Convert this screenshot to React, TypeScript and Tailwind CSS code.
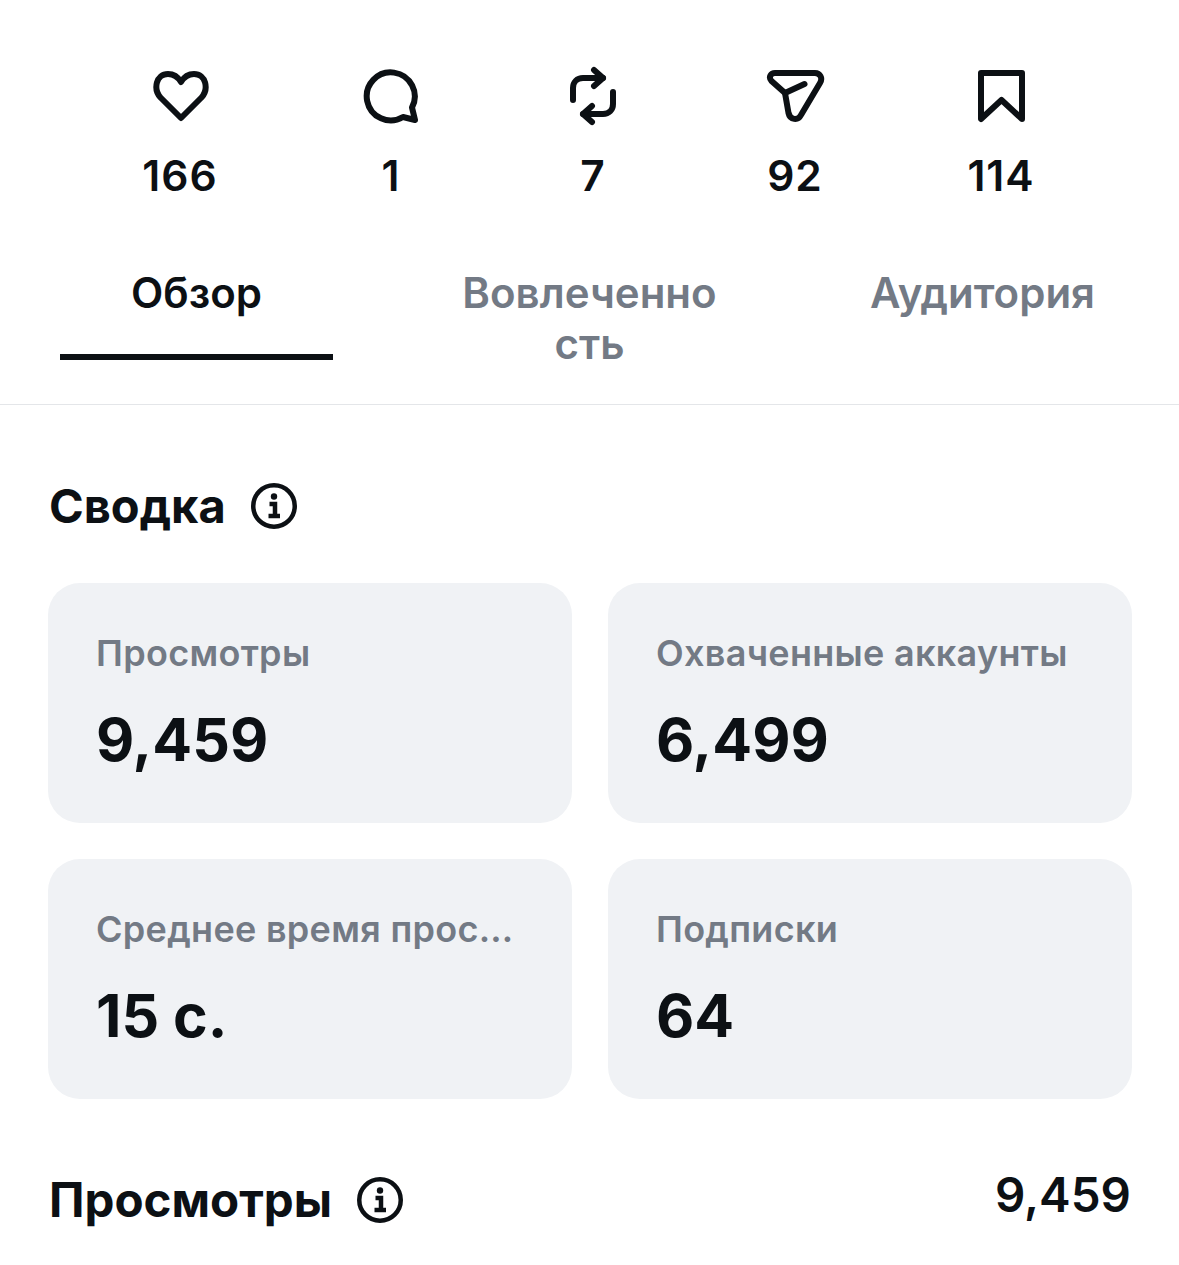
import React from 'react';

const stats = [
  { icon: <HeartIcon />, value: '166' },
  { icon: <CommentIcon />, value: '1' },
  { icon: <RepostIcon />, value: '7' },
  { icon: <SendIcon />, value: '92' },
  { icon: <BookmarkIcon />, value: '114' },
];

const cards = [
  { label: 'Просмотры', value: '9,459' },
  { label: 'Охваченные аккаунты', value: '6,499' },
  { label: 'Среднее время прос…', value: '15 с.' },
  { label: 'Подписки', value: '64' },
];

function HeartIcon() {
  return (
    <svg viewBox="0 0 60 60" className="h-[60px] w-[60px]" fill="none" stroke="#0c1014" strokeWidth="6" strokeLinejoin="round" strokeLinecap="round">
      <path d="M31 52 L10.5 31.5 C3 23 6 8 18 8 C24 8 28 11 31 16 C34 11 38 8 44 8 C56 8 59 23 51.5 31.5 Z" />
    </svg>
  );
}

function CommentIcon() {
  return (
    <svg viewBox="0 0 60 60" className="h-[60px] w-[60px]" fill="none" stroke="#0c1014" strokeWidth="6" strokeLinejoin="round" strokeLinecap="round">
      <path d="M42 51 A24 24 0 1 1 51 41.5 L54 54 Z" />
    </svg>
  );
}

function RepostIcon() {
  return (
    <svg viewBox="0 0 60 60" className="h-[60px] w-[60px]" fill="none" stroke="#0c1014" strokeWidth="6" strokeLinejoin="round" strokeLinecap="round">
      <path d="M10 34 V22 C10 16 14 12 20 12 H40" />
      <path d="M31 4 L40 12 L31 20" />
      <path d="M50 26 V38 C50 44 46 48 40 48 H20" />
      <path d="M29 40 L20 48 L29 56" />
    </svg>
  );
}

function SendIcon() {
  return (
    <svg viewBox="0 0 60 60" className="h-[60px] w-[60px]" fill="none" stroke="#0c1014" strokeWidth="6" strokeLinejoin="round" strokeLinecap="round">
      <path d="M10 7 H50 C55 7 58 12 55 17 L36 49 C33 55 25 54 23.5 47 L20 27 L6.5 15 C3 11 6 7 10 7 Z" />
      <path d="M20 27 L39.5 18" />
    </svg>
  );
}

function BookmarkIcon() {
  return (
    <svg viewBox="0 0 60 60" className="h-[60px] w-[60px]" fill="none" stroke="#0c1014" strokeWidth="6" strokeLinejoin="round" strokeLinecap="round">
      <path d="M10 7 H51 V53 L30.5 34 L10 53 Z" />
    </svg>
  );
}

function InfoIcon() {
  return (
    <svg viewBox="0 0 46 46" className="h-[46px] w-[46px]" fill="none" stroke="#0c1014" strokeWidth="4.5">
      <circle cx="23" cy="23" r="20.75" />
      <circle cx="23" cy="13.5" r="3.2" fill="#0c1014" stroke="none" />
      <path d="M18.5 21 H24 V33" strokeWidth="4.5" />
      <path d="M17.5 33 H29" strokeWidth="4.5" />
    </svg>
  );
}

export default function App() {
  return (
    <div className="h-[1265px] w-[1179px] overflow-hidden bg-white font-['Inter',sans-serif] text-[#0c1014]">
      <div className="grid grid-cols-[210px_212px_192px_212px_200px] pl-[75px] pt-[66px]">
        {stats.map((s, i) => (
          <div key={i} className="flex flex-col items-center">
            {s.icon}
            <div className="mt-[25px] text-[42.5px] leading-[50px] font-semibold tracking-[1px]">{s.value}</div>
          </div>
        ))}
      </div>

      <div className="mt-[66px] flex h-[138px] gap-[120px] border-b border-[#e4e6e9] pl-[60px]">
        <div className="h-[93px] w-[273px] border-b-[6px] border-[#0c1014] text-center text-[42px] leading-[51px] font-semibold">
          Обзор
        </div>
        <div className="w-[273px] text-center text-[42px] leading-[51px] font-semibold text-[#737a85]">
          Вовлеченно
          <br />
          сть
        </div>
        <div className="w-[273px] text-center text-[42px] leading-[51px] font-semibold text-[#737a85]">
          Аудитория
        </div>
      </div>

      <div className="mt-[71px] flex h-[60px] items-center gap-[25px] pl-[49px]">
        <h2 className="text-[47px] leading-[60px] font-bold">Сводка</h2>
        <InfoIcon />
      </div>

      <div className="mt-[47px] grid grid-cols-2 gap-[36px] pr-[47px] pl-[48px]">
        {cards.map((c) => (
          <div key={c.label} className="h-[240px] rounded-[32px] bg-[#f0f2f5] px-[48px] pt-[48px]">
            <div className="text-[36px] leading-[44px] font-semibold tracking-[0.3px] text-[#737a85]">{c.label}</div>
            <div className="mt-[29px] text-[59px] leading-[72px] font-bold">{c.value}</div>
          </div>
        ))}
      </div>

      <div className="mt-[71px] flex h-[60px] items-center justify-between pr-[48px] pl-[49px]">
        <div className="flex items-center gap-[25px]">
          <h2 className="text-[47.5px] leading-[60px] font-bold">Просмотры</h2>
          <InfoIcon />
        </div>
        <div className="mb-[10px] text-[47.5px] leading-[60px] font-semibold">9,459</div>
      </div>
    </div>
  );
}
